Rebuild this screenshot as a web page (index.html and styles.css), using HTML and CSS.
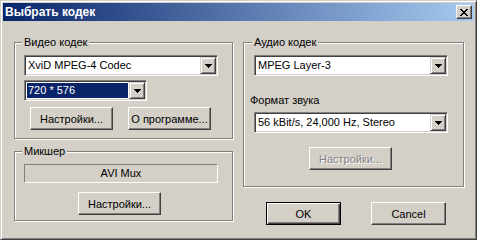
FILE: index.html
```html
<!DOCTYPE html>
<html lang="ru">
<head>
    <meta charset="UTF-8">
    <title>Выбрать кодек</title>
    <link rel="stylesheet" href="styles.css">
</head>
<body>
    <div class="window">
        <div class="titlebar">
            <span class="title">Выбрать кодек</span>
            <button class="close-btn">
                <svg width="8" height="7" viewBox="0 0 8 7"><path d="M0 0h2v1H0zM6 0h2v1H6zM1 1h2v1H1zM5 1h2v1H5zM2 2h4v1H2zM3 3h2v1H3zM2 4h4v1H2zM1 5h2v1H1zM5 5h2v1H5zM0 6h2v1H0zM6 6h2v1H6z" fill="#000"/></svg>
            </button>
        </div>
        <div class="content">
            <div class="column column-left">
                <div class="group group-video">
                    <div class="group-title">Видео кодек</div>
                    <div class="combo combo-wide">
                        <span class="combo-text">XviD MPEG-4 Codec</span>
                        <span class="combo-btn"><svg width="7" height="4" viewBox="0 0 7 4"><path d="M0 0h7v1H0zM1 1h5v1H1zM2 2h3v1H2zM3 3h1v1H3z" fill="#000"/></svg></span>
                    </div>
                    <div class="combo combo-small">
                        <span class="combo-text selected">720 * 576</span>
                        <span class="combo-btn"><svg width="7" height="4" viewBox="0 0 7 4"><path d="M0 0h7v1H0zM1 1h5v1H1zM2 2h3v1H2zM3 3h1v1H3z" fill="#000"/></svg></span>
                    </div>
                    <div class="btn-row">
                        <button class="btn">Настройки...</button>
                        <button class="btn">О программе...</button>
                    </div>
                </div>
                <div class="group group-mixer">
                    <div class="group-title">Микшер</div>
                    <div class="static-field">AVI Mux</div>
                    <button class="btn btn-mixer">Настройки...</button>
                </div>
            </div>
            <div class="column column-right">
                <div class="group group-audio">
                    <div class="group-title">Аудио кодек</div>
                    <div class="combo combo-wide">
                        <span class="combo-text">MPEG Layer-3</span>
                        <span class="combo-btn"><svg width="7" height="4" viewBox="0 0 7 4"><path d="M0 0h7v1H0zM1 1h5v1H1zM2 2h3v1H2zM3 3h1v1H3z" fill="#000"/></svg></span>
                    </div>
                    <div class="field-label">Формат звука</div>
                    <div class="combo combo-wide combo-format">
                        <span class="combo-text">56 kBit/s, 24,000 Hz, Stereo</span>
                        <span class="combo-btn"><svg width="7" height="4" viewBox="0 0 7 4"><path d="M0 0h7v1H0zM1 1h5v1H1zM2 2h3v1H2zM3 3h1v1H3z" fill="#000"/></svg></span>
                    </div>
                    <button class="btn btn-audio" disabled>Настройки...</button>
                </div>
                <div class="dialog-buttons">
                    <button class="btn btn-dialog btn-default">OK</button>
                    <button class="btn btn-dialog">Cancel</button>
                </div>
            </div>
        </div>
    </div>
</body>
</html>
```
FILE: styles.css
```css
body {
    margin: 0;
    background: #d4d0c8;
    font-family: "Liberation Sans", Arial, sans-serif;
    font-size: 11px;
    color: #000;
}
.window {
    width: 477px;
    height: 240px;
    box-sizing: border-box;
    background: #d4d0c8;
    border: 1px solid;
    border-color: #d4d0c8 #404040 #404040 #d4d0c8;
    box-shadow: inset 1px 1px #fff, inset -1px -1px #808080;
    padding: 2px;
}
.titlebar {
    height: 18px;
    display: flex;
    align-items: center;
    justify-content: space-between;
    background: linear-gradient(to right, #0a246a, #a6caf0);
    padding: 0 2px 0 2px;
}
.title {
    color: #fff;
    font-weight: 700;
    font-size: 12px;
    line-height: 18px;
}
.close-btn {
    width: 16px;
    height: 14px;
    padding: 0;
    box-sizing: border-box;
    background: #d4d0c8;
    border: 1px solid;
    border-color: #fff #404040 #404040 #fff;
    box-shadow: inset -1px -1px #808080;
    display: flex;
    align-items: center;
    justify-content: center;
}
.content {
    display: flex;
    gap: 10px;
    padding: 21px 0 0 11px;
}
.column {
    display: flex;
    flex-direction: column;
}
.group {
    display: flex;
    flex-direction: column;
    align-items: flex-start;
    border: 1px solid #808080;
    box-shadow: inset 1px 1px #fff, 1px 1px #fff;
    box-sizing: border-box;
    padding: 0 0 0 9px;
}
.group-title {
    margin: -7px 0 0 -2px;
    padding: 0 2px;
    line-height: 13px;
    background: #d4d0c8;
}
.group-video {
    width: 219px;
    padding-bottom: 8px;
}
.group-mixer {
    width: 219px;
    margin-top: 12px;
    padding-bottom: 5px;
}
.group-audio {
    width: 221px;
    padding-left: 10px;
    padding-bottom: 16px;
}
.combo {
    display: flex;
    height: 21px;
    box-sizing: border-box;
    background: #fff;
    border: 1px solid;
    border-color: #808080 #fff #fff #808080;
    box-shadow: inset 1px 1px #404040, inset -1px -1px #d4d0c8;
    padding: 1px;
}
.combo-wide {
    width: 194px;
    margin-top: 6px;
}
.combo-small {
    width: 123px;
    margin-top: 4px;
}
.combo-format {
    margin-top: 5px;
}
.combo-text {
    flex: 1;
    padding-left: 2px;
    line-height: 17px;
    white-space: nowrap;
}
.combo-text.selected {
    background: #0a246a;
    color: #fff;
    margin: 1px;
    padding-left: 1px;
    line-height: 15px;
}
.combo-btn {
    width: 16px;
    height: 17px;
    box-sizing: border-box;
    background: #d4d0c8;
    border: 1px solid;
    border-color: #d4d0c8 #404040 #404040 #d4d0c8;
    box-shadow: inset 1px 1px #fff, inset -1px -1px #808080;
    display: flex;
    align-items: center;
    justify-content: center;
}
.btn {
    width: 83px;
    height: 23px;
    padding: 0;
    box-sizing: border-box;
    font-family: inherit;
    font-size: 11px;
    color: #000;
    background: #d4d0c8;
    border: 1px solid;
    border-color: #fff #404040 #404040 #fff;
    box-shadow: inset -1px -1px #808080;
}
.btn:disabled {
    color: #808080;
    text-shadow: 1px 1px #fff;
}
.btn-row {
    display: flex;
    gap: 15px;
    margin: 6px 0 0 6px;
}
.static-field {
    width: 194px;
    height: 19px;
    margin-top: 6px;
    box-sizing: border-box;
    border: 1px solid;
    border-color: #808080 #fff #fff #808080;
    text-align: center;
    line-height: 17px;
}
.btn-mixer {
    margin: 9px 0 0 54px;
}
.field-label {
    margin-top: 18px;
    margin-left: -4px;
    line-height: 13px;
}
.btn-audio {
    margin: 14px 0 0 55px;
}
.dialog-buttons {
    display: flex;
    gap: 30px;
    margin: 15px 0 0 23px;
}
.btn-dialog {
    width: 75px;
}
.btn-default {
    border: 1px solid #000;
    box-shadow: inset 1px 1px #fff, inset -1px -1px #404040, inset -2px -2px #808080;
}
```
